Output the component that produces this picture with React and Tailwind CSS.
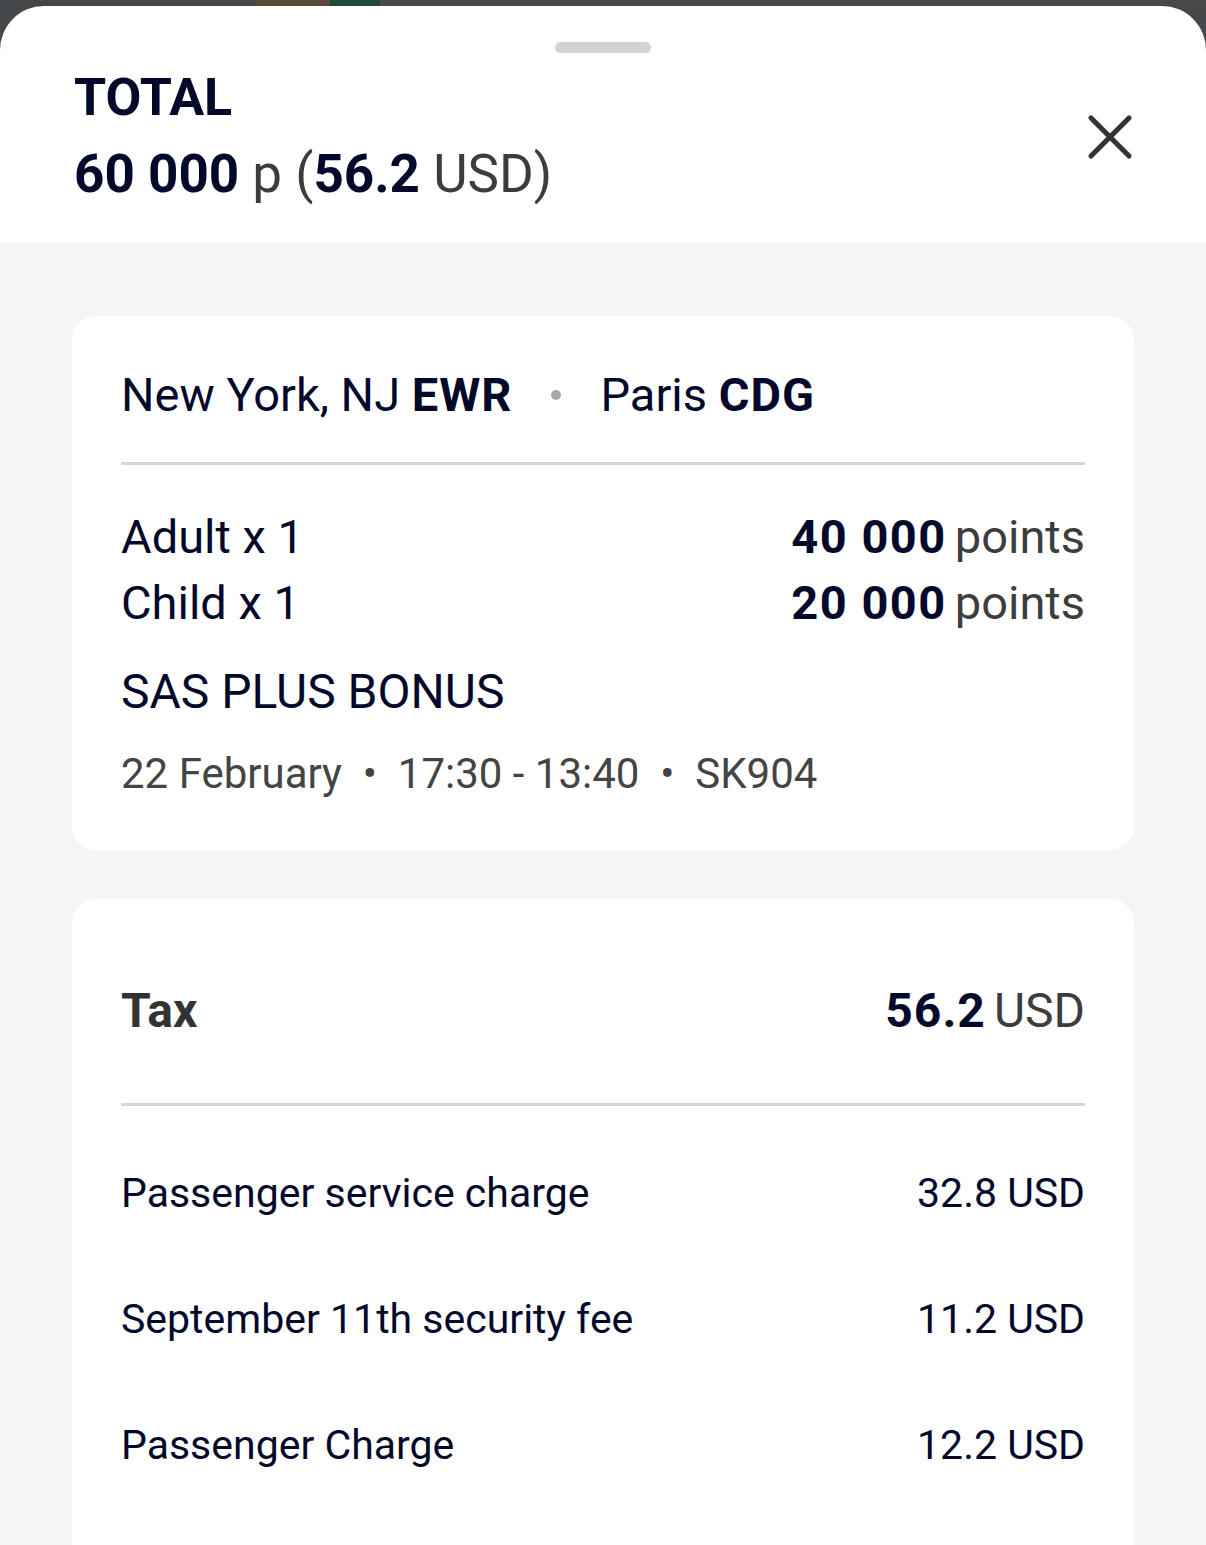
import { X } from 'lucide-react';

const navy = 'text-[#03092b]';

function Row({ label, value }) {
  return (
    <div className={`flex items-center justify-between h-[126px] text-[41px] ${navy}`}>
      <span>{label}</span>
      <span>{value}</span>
    </div>
  );
}

function Points({ value }) {
  return (
    <span>
      <span className="font-bold tracking-[1.5px]">{value}</span>
      <span className="ml-[8px] text-[#3d3d3d]">points</span>
    </span>
  );
}

export default function App() {
  const fees = [
    { label: 'Passenger service charge', value: '32.8 USD' },
    { label: 'September 11th security fee', value: '11.2 USD' },
    { label: 'Passenger Charge', value: '12.2 USD' }
  ];

  return (
    <div className="min-h-[1545px] bg-[#45484a]" style={{ fontFamily: 'Roboto, "Noto Sans", sans-serif' }}>
      {/* strip behind the sheet */}
      <div className="flex h-[6px]">
        <div className="w-[255px] bg-[#43464a]" />
        <div className="w-[75px] bg-[#5a4a3a]" />
        <div className="w-[50px] bg-[#1f4a38]" />
        <div className="flex-1 bg-[#484848]" />
      </div>

      <div className="bg-white rounded-t-[44px] overflow-hidden">
        {/* Header */}
        <div className="pt-[36px] pb-[38px]">
          <div className="mx-auto w-[96px] h-[11px] rounded-full bg-[#d4d3d0]" />
          <div className="flex items-center justify-between pl-[74px] pr-[58px] mt-[15px]">
            <div>
              <div className={`text-[52px] leading-[60px] font-bold ${navy}`}>TOTAL</div>
              <div className="mt-[15px] text-[53px] leading-[62px] text-[#3c3c3c]">
                <span className={`font-bold ${navy}`}>60 000</span> p (
                <span className={`font-bold ${navy}`}>56.2</span> USD)
              </div>
            </div>
            <X className="w-[76px] h-[76px] text-[#333333]" strokeWidth={1.6} />
          </div>
        </div>

        {/* Body */}
        <div className="bg-[#f5f5f5] px-[72px] pt-[73px] pb-[40px]">
          <div className="bg-white rounded-[24px] px-[49px] pt-[51px] pb-[51px]">
            <div className={`flex items-center text-[47px] leading-[56px] ${navy}`}>
              <span>
                New York, NJ <span className="font-bold tracking-[1px]">EWR</span>
              </span>
              <span className="mx-[39px] w-[10px] h-[10px] rounded-full bg-[#a8a8a8]" />
              <span>
                Paris <span className="font-bold tracking-[1px]">CDG</span>
              </span>
            </div>
            <div className="mt-[39px] h-[3px] bg-[#d6d6d6]" />
            <div className={`mt-[39px] text-[47px] leading-[66px] ${navy}`}>
              <div className="flex justify-between">
                <span>Adult x 1</span>
                <Points value="40 000" />
              </div>
              <div className="flex justify-between">
                <span>Child x 1</span>
                <Points value="20 000" />
              </div>
            </div>
            <div className={`mt-[28px] text-[48px] leading-[56px] ${navy}`}>SAS PLUS BONUS</div>
            <div className="mt-[29px] text-[42px] leading-[50px] text-[#444444]">
              22 February &nbsp;•&nbsp; 17:30 - 13:40 &nbsp;•&nbsp; SK904
            </div>
          </div>

          <div className="mt-[49px] bg-white rounded-[24px] px-[49px] pt-[84px] pb-[60px]">
            <div className="flex justify-between text-[48px] leading-[56px]">
              <span className="font-bold text-[#333333]">Tax</span>
              <span>
                <span className={`font-bold tracking-[1px] ${navy}`}>56.2</span>
                <span className="ml-[8px] text-[#3d3d3d]">USD</span>
              </span>
            </div>
            <div className="mt-[64px] h-[3px] bg-[#d6d6d6]" />
            <div className="mt-[25px]">
              {fees.map((f, i) => (
                <Row key={i} label={f.label} value={f.value} />
              ))}
            </div>
          </div>
        </div>
      </div>
    </div>
  );
}
